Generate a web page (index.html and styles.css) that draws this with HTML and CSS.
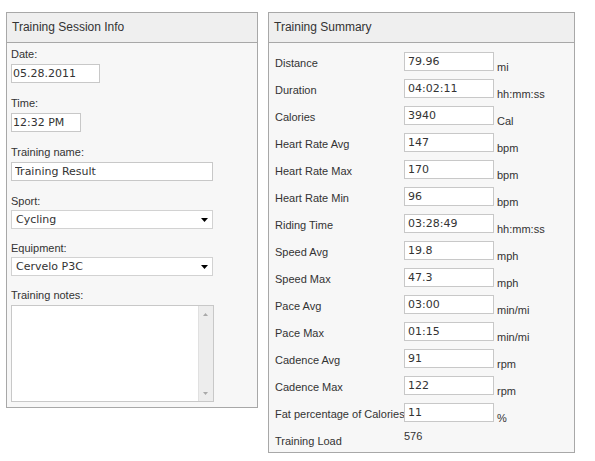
FILE: index.html
```html
<!DOCTYPE html>
<html lang="en">
<head>
  <meta charset="UTF-8" />
  <title>Training Result</title>
  <link rel="stylesheet" href="styles.css">
</head>
<body>

<div class="panel panel-info">
  <div class="panel-head">Training Session Info</div>
  <div class="info-body">
    <label class="lbl">Date:</label>
    <input type="text" class="txt txt-date" value="05.28.2011">

    <label class="lbl">Time:</label>
    <input type="text" class="txt txt-time" value="12:32 PM">

    <label class="lbl">Training name:</label>
    <input type="text" class="txt txt-wide" value="Training Result">

    <label class="lbl lbl-sel">Sport:</label>
    <div class="sel-wrap">
      <select class="sel">
        <option>Cycling</option>
      </select>
    </div>

    <label class="lbl lbl-sel">Equipment:</label>
    <div class="sel-wrap">
      <select class="sel">
        <option>Cervelo P3C</option>
      </select>
    </div>

    <label class="lbl">Training notes:</label>
    <div class="notes-wrap">
      <textarea class="notes"></textarea>
      <div class="fake-scroll"></div>
    </div>
  </div>
</div>

<div class="panel panel-summary">
  <div class="panel-head">Training Summary</div>
  <div class="summary">
    <div class="row"><span class="row-lbl">Distance</span><input type="text" class="txt" value="79.96"><span class="unit">mi</span></div>
    <div class="row"><span class="row-lbl">Duration</span><input type="text" class="txt" value="04:02:11"><span class="unit">hh:mm:ss</span></div>
    <div class="row"><span class="row-lbl">Calories</span><input type="text" class="txt" value="3940"><span class="unit">Cal</span></div>
    <div class="row"><span class="row-lbl">Heart Rate Avg</span><input type="text" class="txt" value="147"><span class="unit">bpm</span></div>
    <div class="row"><span class="row-lbl">Heart Rate Max</span><input type="text" class="txt" value="170"><span class="unit">bpm</span></div>
    <div class="row"><span class="row-lbl">Heart Rate Min</span><input type="text" class="txt" value="96"><span class="unit">bpm</span></div>
    <div class="row"><span class="row-lbl">Riding Time</span><input type="text" class="txt" value="03:28:49"><span class="unit">hh:mm:ss</span></div>
    <div class="row"><span class="row-lbl">Speed Avg</span><input type="text" class="txt" value="19.8"><span class="unit">mph</span></div>
    <div class="row"><span class="row-lbl">Speed Max</span><input type="text" class="txt" value="47.3"><span class="unit">mph</span></div>
    <div class="row"><span class="row-lbl">Pace Avg</span><input type="text" class="txt" value="03:00"><span class="unit">min/mi</span></div>
    <div class="row"><span class="row-lbl">Pace Max</span><input type="text" class="txt" value="01:15"><span class="unit">min/mi</span></div>
    <div class="row"><span class="row-lbl">Cadence Avg</span><input type="text" class="txt" value="91"><span class="unit">rpm</span></div>
    <div class="row"><span class="row-lbl">Cadence Max</span><input type="text" class="txt" value="122"><span class="unit">rpm</span></div>
    <div class="row"><span class="row-lbl">Fat percentage of Calories</span><input type="text" class="txt" value="11"><span class="unit">%</span></div>
    <div class="row"><span class="row-lbl">Training Load</span><span class="row-val">576</span></div>
  </div>
</div>

</body>
</html>
```

FILE: styles.css
```css
body {
  margin: 0;
  padding: 12px 0 0 6px;
  background: #fff;
  display: flex;
  align-items: flex-start;
  gap: 10px;
  font-family: "Liberation Sans", Arial, sans-serif;
  font-size: 11px;
  color: #333;
}

.panel {
  box-sizing: border-box;
  border: 1px solid #a8a8a8;
  background: #f7f7f7;
}

.panel-info {
  width: 252px;
}

.panel-summary {
  width: 307px;
}

.panel-head {
  height: 29px;
  line-height: 29px;
  padding-left: 5px;
  font-size: 12px;
  color: #333;
  background: #efefef;
  border-bottom: 1px solid #a8a8a8;
}

/* left form */
.info-body {
  padding: 5px 4px 5px 4px;
}

.lbl {
  display: block;
  line-height: 13px;
  margin-bottom: 3px;
}

.lbl-sel {
  margin-bottom: 2px;
}

.txt {
  display: block;
  box-sizing: border-box;
  height: 19px;
  margin: 0;
  padding: 0 3px;
  border: 1px solid #c8c8c8;
  background: #fff;
  font-family: "DejaVu Sans", Verdana, sans-serif;
  font-size: 11px;
  color: #333;
  outline: none;
}

.info-body .txt {
  margin-bottom: 14px;
}

.txt-date {
  width: 89px;
  padding-left: 1px;
}

.txt-time {
  width: 70px;
  padding-left: 1px;
}

.txt-wide {
  width: 202px;
}

.sel-wrap {
  position: relative;
  width: 202px;
  margin-bottom: 13px;
}

.sel-wrap::after {
  content: "";
  position: absolute;
  right: 5px;
  top: 8px;
  width: 7px;
  height: 4px;
  background: #000;
  clip-path: polygon(0 0, 100% 0, 50% 100%);
}

.sel {
  display: block;
  box-sizing: border-box;
  width: 202px;
  height: 19px;
  margin: 0;
  padding: 0 0 0 4px;
  border: 1px solid #d2d2d2;
  border-radius: 0;
  background: #fff;
  appearance: none;
  -webkit-appearance: none;
  font-family: "DejaVu Sans", Verdana, sans-serif;
  font-size: 11px;
  color: #333;
  outline: none;
}

.notes-wrap {
  position: relative;
  width: 203px;
  height: 97px;
}

.notes {
  display: block;
  box-sizing: border-box;
  width: 203px;
  height: 97px;
  margin: 0;
  border: 1px solid #c8c8c8;
  background: #fff;
  resize: none;
  overflow: hidden;
  outline: none;
}

.fake-scroll {
  position: absolute;
  top: 1px;
  right: 1px;
  bottom: 1px;
  width: 14px;
  background: #ededed;
  border-left: 1px solid #e0e0e0;
}

.fake-scroll::before,
.fake-scroll::after {
  content: "";
  position: absolute;
  left: 4px;
  width: 5px;
  height: 3px;
  background: #a9a9a9;
}

.fake-scroll::before {
  top: 7px;
  clip-path: polygon(50% 0, 100% 100%, 0 100%);
}

.fake-scroll::after {
  bottom: 6px;
  clip-path: polygon(0 0, 100% 0, 50% 100%);
}

/* right summary */
.summary {
  display: flex;
  flex-direction: column;
  gap: 8px;
  padding: 9px 6px 3px 6px;
}

.row {
  display: grid;
  grid-template-columns: 129px 90px 1fr;
  height: 19px;
}

.row-lbl {
  padding-top: 5px;
  line-height: 13px;
  white-space: nowrap;
}

.row .txt {
  width: 90px;
}

.unit {
  padding-top: 9px;
  padding-left: 3px;
  line-height: 13px;
  white-space: nowrap;
}

.row-val {
  line-height: 13px;
}
```
